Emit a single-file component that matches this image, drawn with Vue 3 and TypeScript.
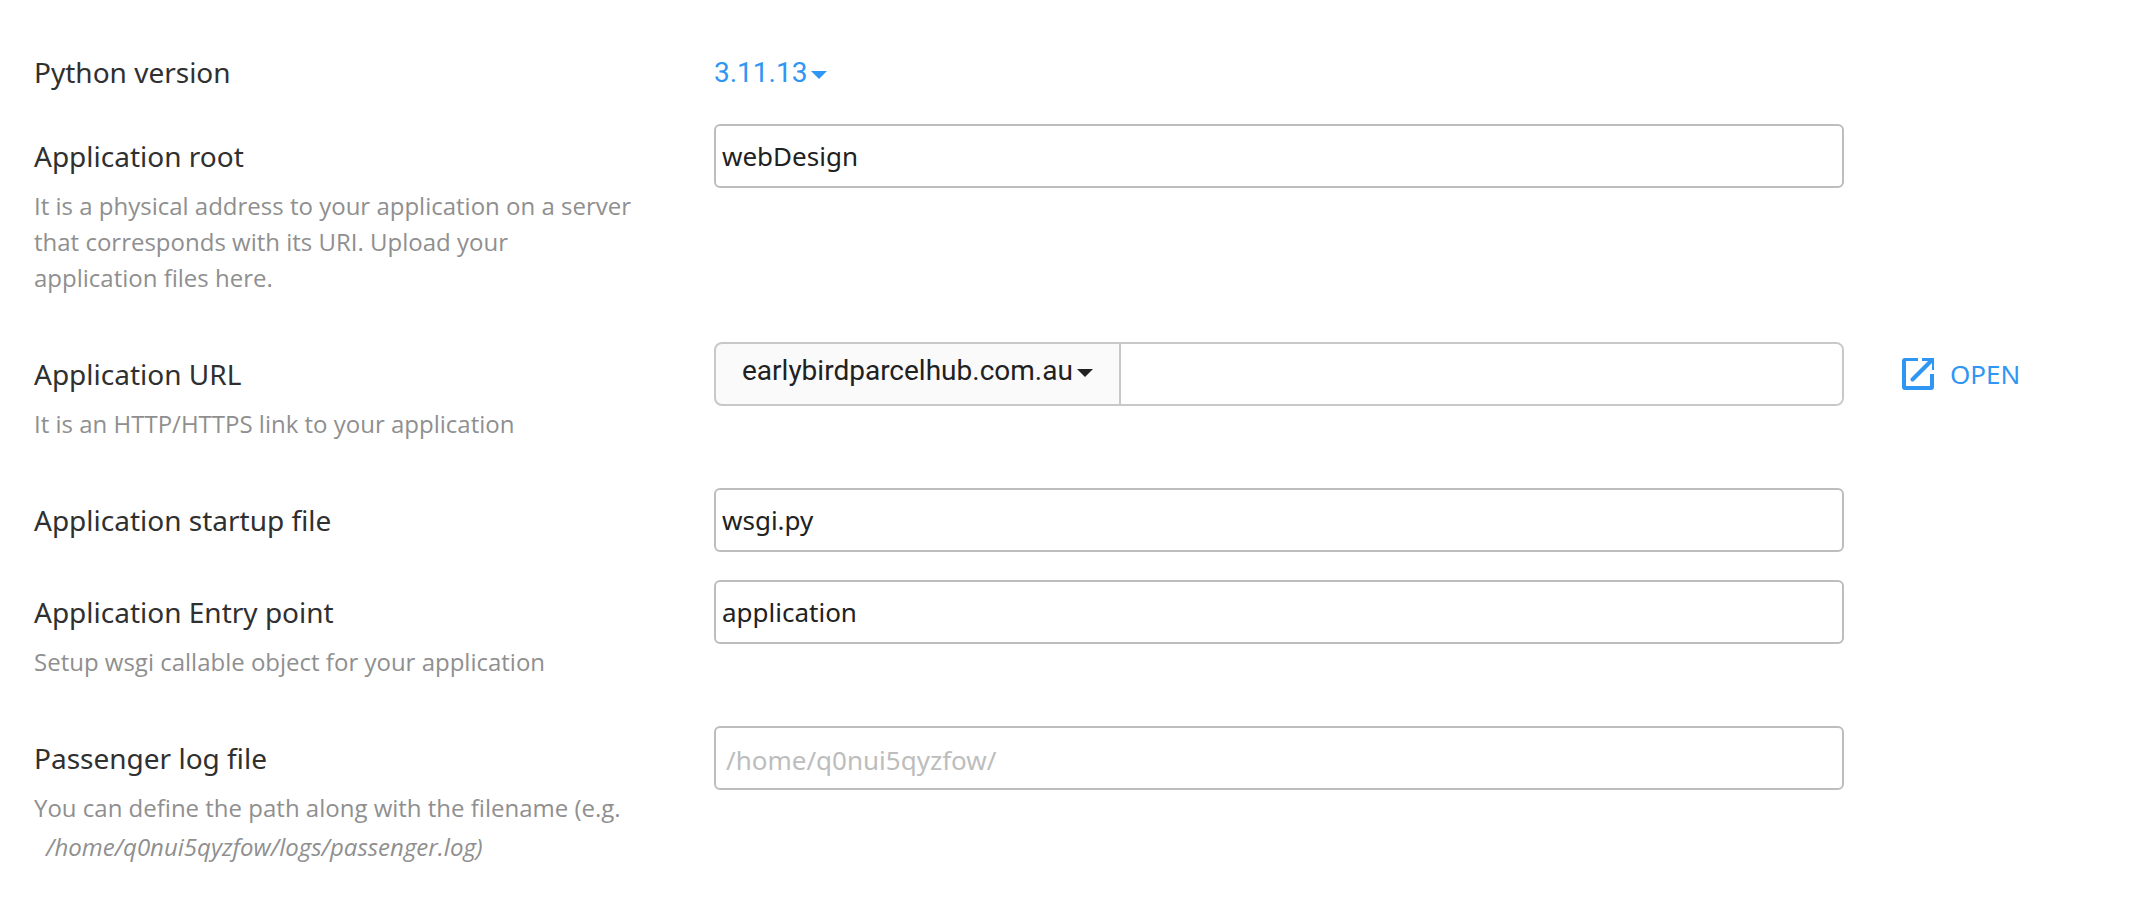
<script setup lang="ts">
import { ref } from 'vue'

const pythonVersion = ref('3.11.13')
const appRoot = ref('webDesign')
const domain = ref('earlybirdparcelhub.com.au')
const uri = ref('')
const startupFile = ref('wsgi.py')
const entryPoint = ref('application')
const logFile = ref('')
</script>

<template>
  <form class="settings" @submit.prevent>
    <div class="row row-version">
      <div class="info"><label class="name" for="version">Python version</label></div>
      <div class="field">
        <div class="picker version">
          <select id="version" v-model="pythonVersion"><option>3.11.13</option></select>
          <svg class="caret" viewBox="0 0 16 8" aria-hidden="true"><path d="M0 0H16L8 8Z" /></svg>
        </div>
      </div>
    </div>

    <div class="row">
      <div class="info">
        <label class="name" for="root">Application root</label>
        <p class="hint">It is a physical address to your application on a server that corresponds with its URI. Upload your application files here.</p>
      </div>
      <div class="field"><input id="root" v-model="appRoot" class="box" type="text" /></div>
    </div>

    <div class="row">
      <div class="info">
        <label class="name" for="uri">Application URL</label>
        <p class="hint">It is an HTTP/HTTPS link to your application</p>
      </div>
      <div class="field">
        <div class="group">
          <div class="picker domain">
            <select v-model="domain" aria-label="Domain"><option>earlybirdparcelhub.com.au</option></select>
            <svg class="caret" viewBox="0 0 16 8" aria-hidden="true"><path d="M0 0H16L8 8Z" /></svg>
          </div>
          <input id="uri" v-model="uri" class="uri" type="text" />
        </div>
      </div>
      <div class="action">
        <a class="open" href="#">
          <svg class="open-icon" viewBox="0 0 32 32" aria-hidden="true">
            <path d="M16 0V3H4V28H28V16H32V29Q32 32 29 32H3Q0 32 0 29V3Q0 0 3 0Z" />
            <path d="M20 0H32V12H30V5L27 3H20Z" />
            <path class="shaft" d="M10.5 21.5L29.5 2.5" />
          </svg>
          <span>OPEN</span>
        </a>
      </div>
    </div>

    <div class="row">
      <div class="info"><label class="name" for="startup">Application startup file</label></div>
      <div class="field"><input id="startup" v-model="startupFile" class="box" type="text" /></div>
    </div>

    <div class="row">
      <div class="info">
        <label class="name" for="entry">Application Entry point</label>
        <p class="hint">Setup wsgi callable object for your application</p>
      </div>
      <div class="field"><input id="entry" v-model="entryPoint" class="box" type="text" /></div>
    </div>

    <div class="row">
      <div class="info">
        <label class="name" for="log">Passenger log file</label>
        <p class="hint">You can define the path along with the filename (e.g. <em class="path">/home/q0nui5qyzfow/logs/passenger.log)</em></p>
      </div>
      <div class="field"><input id="log" v-model="logFile" class="box log" type="text" placeholder="/home/q0nui5qyzfow/" /></div>
    </div>
  </form>
</template>

<style>
body {
  background: #fff;
}
</style>

<style scoped>
.settings {
  display: flex;
  flex-direction: column;
  gap: 28px;
  padding: 40px 90px 24px 4px;
  font-family: "Noto Sans", "Open Sans", sans-serif;
  color: #303030;
}

.row {
  display: grid;
  grid-template-columns: minmax(0, 4fr) minmax(0, 7fr) minmax(0, 1fr);
  align-items: start;
}

.row-version {
  min-height: 56px;
}

.info,
.field,
.action {
  padding: 0 30px;
}

.name {
  display: block;
  padding-top: 12px;
  font-size: 28px;
  line-height: 40px;
}

.hint {
  margin: 12px 0 0;
  padding: 0 20px 18px 0;
  font-family: "Open Sans", "Noto Sans", sans-serif;
  font-size: 24px;
  line-height: 36px;
  color: #8f8f8f;
}

.path {
  display: block;
  padding-left: 12px;
  line-height: 42px;
}

input,
select {
  box-sizing: border-box;
  margin: 0;
  outline: none;
}

.box {
  display: block;
  width: 100%;
  height: 64px;
  padding: 0 6px;
  border: 2px solid #bdbdbd;
  border-radius: 6px;
  background: #fff;
  font: 26px "Noto Sans", "Open Sans", sans-serif;
  color: #212121;
}

.log {
  padding: 4px 10px 0;
}

.box::placeholder {
  color: #bdbdbd;
  opacity: 1;
}

.picker {
  position: relative;
  display: flex;
  width: fit-content;
}

.picker select {
  appearance: none;
  border: 0;
  background: none;
  font: 28px Roboto, sans-serif;
  color: inherit;
  cursor: pointer;
}

.caret {
  position: absolute;
  width: 16px;
  height: 8px;
  fill: currentColor;
  pointer-events: none;
}

.version {
  padding-top: 12px;
  color: #2f96f3;
}

.version select {
  height: 40px;
  padding: 0 19px 0 0;
}

.version .caret {
  right: 0;
  top: 31px;
}

.group {
  display: flex;
  box-sizing: border-box;
  height: 64px;
  overflow: hidden;
  border: 2px solid #c8c8c8;
  border-radius: 8px;
  background: #fafafa;
}

.domain {
  border-right: 2px solid #c8c8c8;
  color: #212121;
}

.domain select {
  padding: 0 46px 8px 26px;
}

.domain .caret {
  right: 26px;
  top: 25px;
}

.uri {
  flex: 1;
  min-width: 0;
  padding: 0 12px;
  border: 0;
  border-radius: 4px 0 0 0;
  background: #fff;
  font: 26px "Noto Sans", "Open Sans", sans-serif;
  color: #212121;
}

.action {
  padding-right: 0;
}

.open {
  display: flex;
  align-items: center;
  gap: 16px;
  height: 64px;
  margin-left: -2px;
  font-size: 26px;
  color: #2f96f3;
  text-decoration: none;
}

.open-icon {
  flex: none;
  width: 32px;
  height: 32px;
  fill: currentColor;
}

.shaft {
  fill: none;
  stroke: currentColor;
  stroke-width: 4;
  stroke-linecap: round;
}
</style>
